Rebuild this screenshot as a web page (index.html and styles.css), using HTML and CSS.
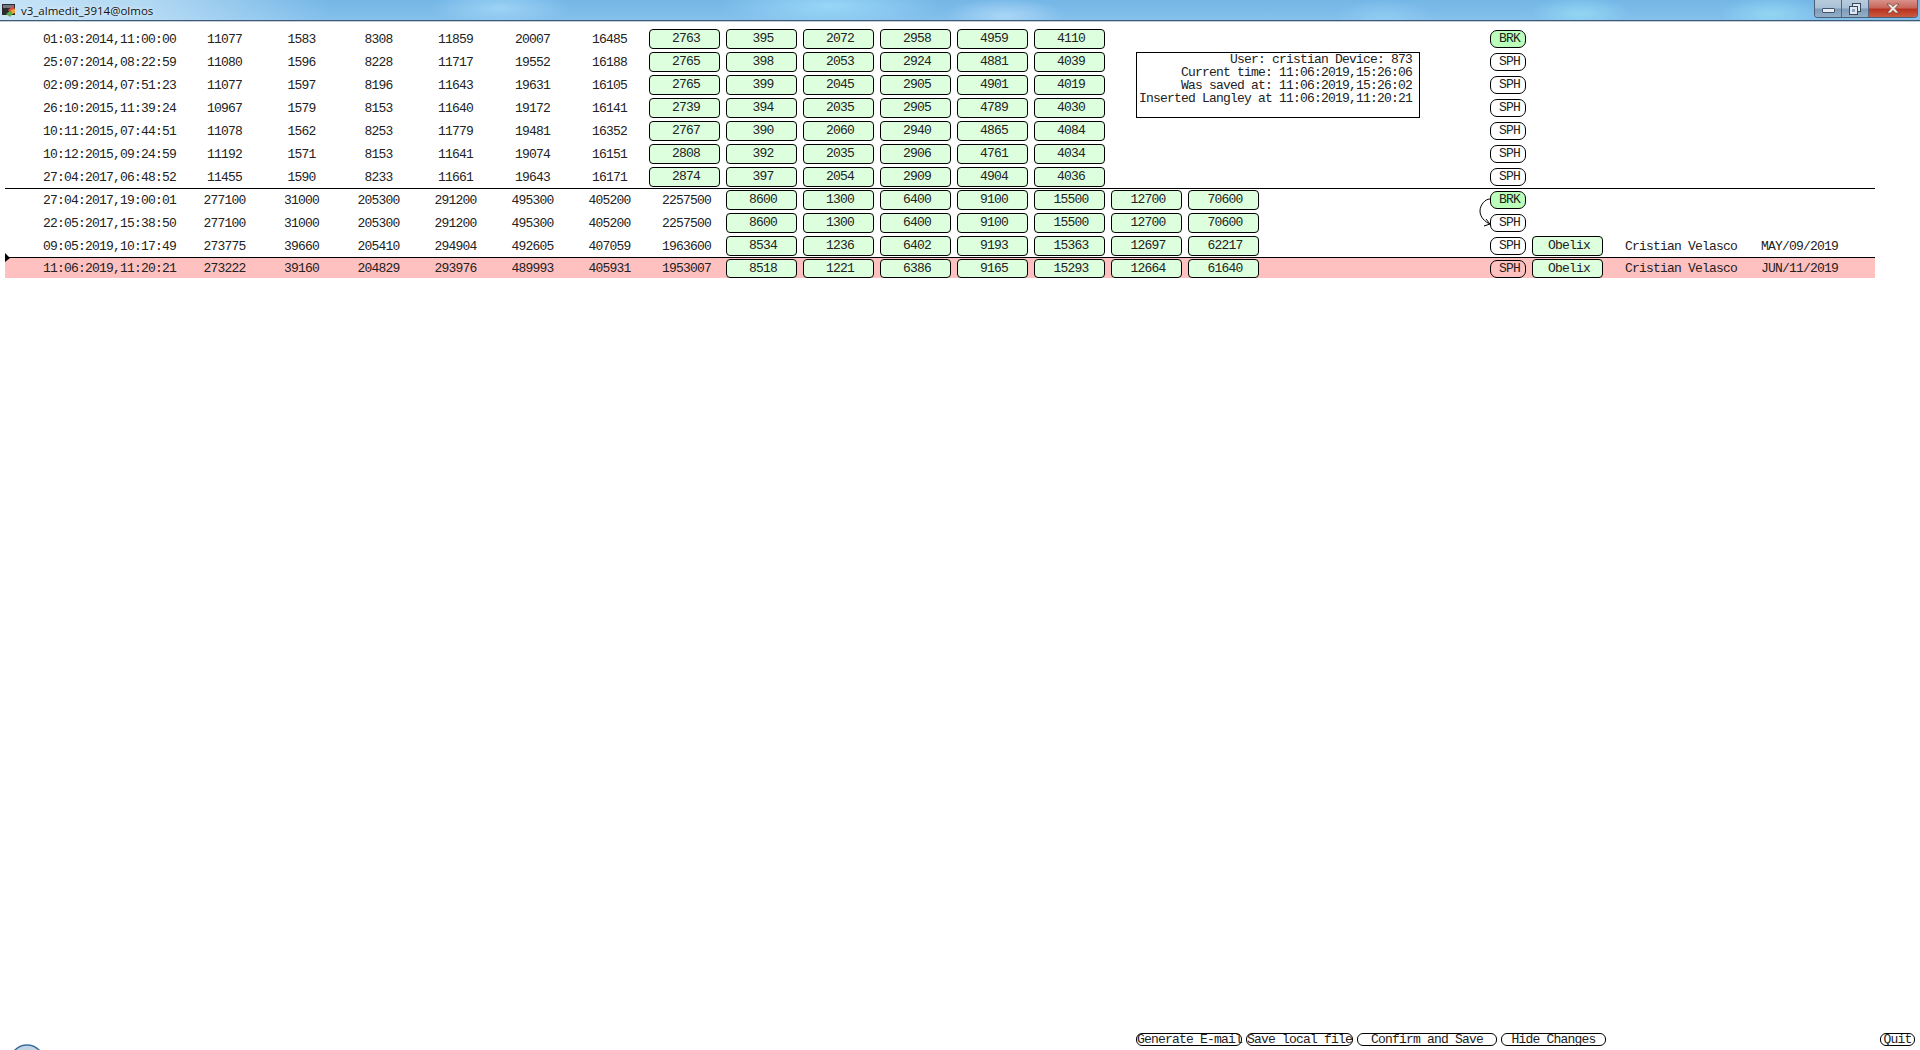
FILE: index.html
```html
<!DOCTYPE html>
<html lang="en">
<head>
<meta charset="utf-8">
<title>v3_almedit_3914@olmos</title>
<link rel="stylesheet" href="styles.css">
</head>
<body>
<header class="titlebar">
  <svg class="app-icon" width="16" height="16" viewBox="0 0 16 16"><rect x="1" y="2" width="13" height="11" fill="#2c2c30"/><rect x="2" y="3" width="11" height="3" fill="#77777c"/><path d="M7 8l5-4 2 3-5 4z" fill="#d8503c"/><path d="M5 12l4-3 3 2-3 4z" fill="#5cb048"/><path d="M10 8l4-1v4l-3 1z" fill="#e8a83c"/></svg>
  <span class="title-text">v3_almedit_3914@olmos</span>
  <div class="win-controls">
    <div class="win-btn win-min"><span class="min-glyph"></span></div>
    <div class="win-btn win-max"><svg width="12" height="12" viewBox="0 0 12 12"><rect x="3.5" y="0.5" width="8" height="8" fill="#dfe8f0" stroke="#39475a"/><rect x="0.5" y="3.5" width="8" height="8" fill="#dfe8f0" stroke="#39475a"/><rect x="3" y="6" width="3" height="3" fill="#8ea4ba"/></svg></div>
    <div class="win-btn win-close"><svg width="16" height="11" viewBox="0 0 16 11"><path d="M2 1h3.5L8 3.6 10.500 1H14l-4 4.500L14 10h-3.500L8 7.400 5.500 10H2l4-4.500z" fill="#f2e8e4" stroke="#6b3a30" stroke-width="0.700"/></svg></div>
  </div>
</header>

<main class="table">
  <div class="row"><span class="date">01:03:2014,11:00:00</span><span>11077</span><span>1583</span><span>8308</span><span>11859</span><span>20007</span><span>16485</span><span class="btn">2763</span><span class="btn">395</span><span class="btn">2072</span><span class="btn">2958</span><span class="btn">4959</span><span class="btn">4110</span><span class="btn tag brk">BRK</span></div>
  <div class="row"><span class="date">25:07:2014,08:22:59</span><span>11080</span><span>1596</span><span>8228</span><span>11717</span><span>19552</span><span>16188</span><span class="btn">2765</span><span class="btn">398</span><span class="btn">2053</span><span class="btn">2924</span><span class="btn">4881</span><span class="btn">4039</span><span class="btn tag">SPH</span></div>
  <div class="row"><span class="date">02:09:2014,07:51:23</span><span>11077</span><span>1597</span><span>8196</span><span>11643</span><span>19631</span><span>16105</span><span class="btn">2765</span><span class="btn">399</span><span class="btn">2045</span><span class="btn">2905</span><span class="btn">4901</span><span class="btn">4019</span><span class="btn tag">SPH</span></div>
  <div class="row"><span class="date">26:10:2015,11:39:24</span><span>10967</span><span>1579</span><span>8153</span><span>11640</span><span>19172</span><span>16141</span><span class="btn">2739</span><span class="btn">394</span><span class="btn">2035</span><span class="btn">2905</span><span class="btn">4789</span><span class="btn">4030</span><span class="btn tag">SPH</span></div>
  <div class="row"><span class="date">10:11:2015,07:44:51</span><span>11078</span><span>1562</span><span>8253</span><span>11779</span><span>19481</span><span>16352</span><span class="btn">2767</span><span class="btn">390</span><span class="btn">2060</span><span class="btn">2940</span><span class="btn">4865</span><span class="btn">4084</span><span class="btn tag">SPH</span></div>
  <div class="row"><span class="date">10:12:2015,09:24:59</span><span>11192</span><span>1571</span><span>8153</span><span>11641</span><span>19074</span><span>16151</span><span class="btn">2808</span><span class="btn">392</span><span class="btn">2035</span><span class="btn">2906</span><span class="btn">4761</span><span class="btn">4034</span><span class="btn tag">SPH</span></div>
  <div class="row"><span class="date">27:04:2017,06:48:52</span><span>11455</span><span>1590</span><span>8233</span><span>11661</span><span>19643</span><span>16171</span><span class="btn">2874</span><span class="btn">397</span><span class="btn">2054</span><span class="btn">2909</span><span class="btn">4904</span><span class="btn">4036</span><span class="btn tag">SPH</span></div>

  <div class="row ruled"><span class="date">27:04:2017,19:00:01</span><span>277100</span><span>31000</span><span>205300</span><span>291200</span><span>495300</span><span>405200</span><span>2257500</span><span class="btn">8600</span><span class="btn">1300</span><span class="btn">6400</span><span class="btn">9100</span><span class="btn">15500</span><span class="btn">12700</span><span class="btn">70600</span><span class="btn tag brk">BRK</span></div>
  <div class="row"><span class="date">22:05:2017,15:38:50</span><span>277100</span><span>31000</span><span>205300</span><span>291200</span><span>495300</span><span>405200</span><span>2257500</span><span class="btn">8600</span><span class="btn">1300</span><span class="btn">6400</span><span class="btn">9100</span><span class="btn">15500</span><span class="btn">12700</span><span class="btn">70600</span><span class="btn tag">SPH</span></div>
  <div class="row"><span class="date">09:05:2019,10:17:49</span><span>273775</span><span>39660</span><span>205410</span><span>294904</span><span>492605</span><span>407059</span><span>1963600</span><span class="btn">8534</span><span class="btn">1236</span><span class="btn">6402</span><span class="btn">9193</span><span class="btn">15363</span><span class="btn">12697</span><span class="btn">62217</span><span class="btn tag">SPH</span><span class="btn">Obelix</span><span class="name">Cristian Velasco</span><span class="when">MAY/09/2019</span></div>
  <div class="row ruled current"><span class="date">11:06:2019,11:20:21</span><span>273222</span><span>39160</span><span>204829</span><span>293976</span><span>489993</span><span>405931</span><span>1953007</span><span class="btn">8518</span><span class="btn">1221</span><span class="btn">6386</span><span class="btn">9165</span><span class="btn">15293</span><span class="btn">12664</span><span class="btn">61640</span><span class="btn tag">SPH</span><span class="btn">Obelix</span><span class="name">Cristian Velasco</span><span class="when">JUN/11/2019</span></div>

  <div class="info">User: cristian Device: 873
Current time: 11:06:2019,15:26:06
Was saved at: 11:06:2019,15:26:02
Inserted Langley at 11:06:2019,11:20:21</div>
  <svg class="arc" width="16" height="32" viewBox="0 0 16 32"><path d="M14 1C9 1 4 7 4 13c0 6 5 11 10 13" fill="none" stroke="#000"/><path d="M10 21l4 5-6 2" fill="none" stroke="#000"/></svg>
  <span class="marker"></span>
</main>

<footer class="actions">
  <button class="action act-mail">Generate E-mail</button>
  <button class="action act-file">Save local file</button>
  <button class="action act-save">Confirm and Save</button>
  <button class="action act-hide">Hide Changes</button>
  <button class="action act-quit">Quit</button>
</footer>
<svg class="orb" width="36" height="6" viewBox="0 0 36 6"><circle cx="18" cy="18" r="17" fill="#c4d4e2" stroke="#3a6f9f" stroke-width="1.500"/></svg>
</body>
</html>
```

FILE: styles.css
```css
* { box-sizing: border-box; }
html, body { margin: 0; height: 100%; }
body {
  position: relative;
  display: flex;
  flex-direction: column;
  height: 1050px;
  overflow: hidden;
  background: #fff;
  color: #222;
  font-family: "Liberation Mono", "DejaVu Sans Mono", monospace;
  font-size: 13px;
  font-weight: 400;
  letter-spacing: -0.8px;
}

/* window title bar */
.titlebar {
  display: flex;
  align-items: center;
  flex: none;
  height: 21px;
  border-bottom: 1px solid #3d5a78;
  padding-left: 1px;
  box-shadow: 0 1px 0 rgba(60,90,120,.3);
  background:
    linear-gradient(90deg, rgba(225,242,252,.75) 0, rgba(225,242,252,.55) 150px, rgba(225,242,252,0) 330px),
    radial-gradient(70px 20px at 500px 8px, rgba(170,220,250,.7), transparent),
    radial-gradient(110px 24px at 830px 6px, rgba(160,222,250,.8), transparent),
    radial-gradient(60px 18px at 1005px 16px, rgba(180,220,250,.8), transparent),
    radial-gradient(50px 18px at 1385px 18px, rgba(150,210,245,.7), transparent),
    radial-gradient(50px 18px at 1580px 14px, rgba(150,220,245,.8), transparent),
    radial-gradient(50px 18px at 1770px 14px, rgba(150,220,245,.8), transparent),
    linear-gradient(180deg, #74b6e6 0, #84c0ec 100%);
}
.app-icon { flex: none; }
.title-text {
  margin-left: 4px;
  font-family: "Open Sans", "Noto Sans", sans-serif;
  font-size: 11.5px;
  letter-spacing: 0;
  color: #111;
  text-shadow: 0 0 4px rgba(255,255,255,.9);
}
.win-controls {
  display: flex;
  align-self: flex-start;
  height: 18px;
  margin-left: auto;
  margin-right: 2px;
  border: 1px solid #4d5f74;
  border-top: 0;
  border-radius: 0 0 4px 4px;
  overflow: hidden;
}
.win-btn {
  display: flex;
  align-items: center;
  justify-content: center;
}
.win-min, .win-max {
  width: 27px;
  border-right: 1px solid #55687d;
  background: linear-gradient(180deg, #b8cbdc 0, #a9c0d6 45%, #7f9cb8 55%, #93aec8 100%);
}
.min-glyph {
  display: block;
  width: 13px;
  height: 5px;
  margin-top: 4px;
  border: 1px solid #44546a;
  border-radius: 1px;
  background: #e6edf4;
}
.win-close {
  width: 48px;
  background: linear-gradient(180deg, #d8918a 0, #c8675c 45%, #b8331f 55%, #cc5a40 100%);
}

/* data table */
.table {
  position: relative;
  flex: none;
  width: 1870px;
  margin: 6px 0 0 5px;
}
.row {
  display: grid;
  grid-template-columns: 181px repeat(14, 77px) 225px 42px 77px 153px 1fr;
  align-items: center;
  justify-items: center;
  height: 23px;
  padding-top: 1px;
  line-height: 13px;
}
.ruled { padding-top: 0; border-top: 1px solid #000; }
.current { height: 21px; background: #ffc0c0; }
.date {
  justify-self: end;
  padding-right: 10px;
}
.btn {
  align-self: start;
  justify-self: start;
  width: 71px;
  height: 20px;
  margin: 1px 0 0 1px;
  padding-left: 3px;
  border: 1px solid #000;
  border-radius: 4px;
  background: #ddffdd;
  line-height: 18px;
  text-align: center;
}
.tag {
  grid-column: 17;
  width: 36px;
  height: 18px;
  margin-top: 2px;
  border-radius: 7px;
  background: #fff;
  line-height: 16px;
}
.brk { background: #bbffbb; }
.ruled .btn { margin-top: 1px; }
.ruled .tag { margin-top: 2px; }
.current .btn { height: 19px; line-height: 17px; }
.current .tag { height: 18px; line-height: 16px; background: #ffc0c0; }
.name { justify-self: start; padding-left: 17px; }
.when { justify-self: start; }

/* overlays on the table */
.info {
  position: absolute;
  top: 25px;
  left: 1131px;
  width: 284px;
  height: 66px;
  padding-right: 7px;
  border: 1px solid #000;
  background: #fff;
  line-height: 13px;
  text-align: right;
  white-space: pre;
}
.arc {
  position: absolute;
  top: 171px;
  left: 1471px;
}
.marker {
  position: absolute;
  top: 226px;
  left: 0;
  border-top: 5px solid transparent;
  border-bottom: 4px solid transparent;
  border-left: 5px solid #000;
}

/* bottom buttons */
.actions {
  display: flex;
  gap: 4px;
  margin-top: auto;
  padding: 0 5px 4px 1136px;
}
.action {
  height: 13px;
  padding: 0;
  border: 1px solid #000;
  border-radius: 6px;
  background: #fff;
  color: inherit;
  font: inherit;
  letter-spacing: inherit;
  line-height: 11px;
  white-space: nowrap;
}
.act-mail { width: 106px; }
.act-file { width: 107px; }
.act-save { width: 140px; }
.act-hide { width: 105px; }
.act-quit { width: 35px; margin-left: auto; }
.orb {
  position: absolute;
  bottom: 0;
  left: 9px;
}
```
